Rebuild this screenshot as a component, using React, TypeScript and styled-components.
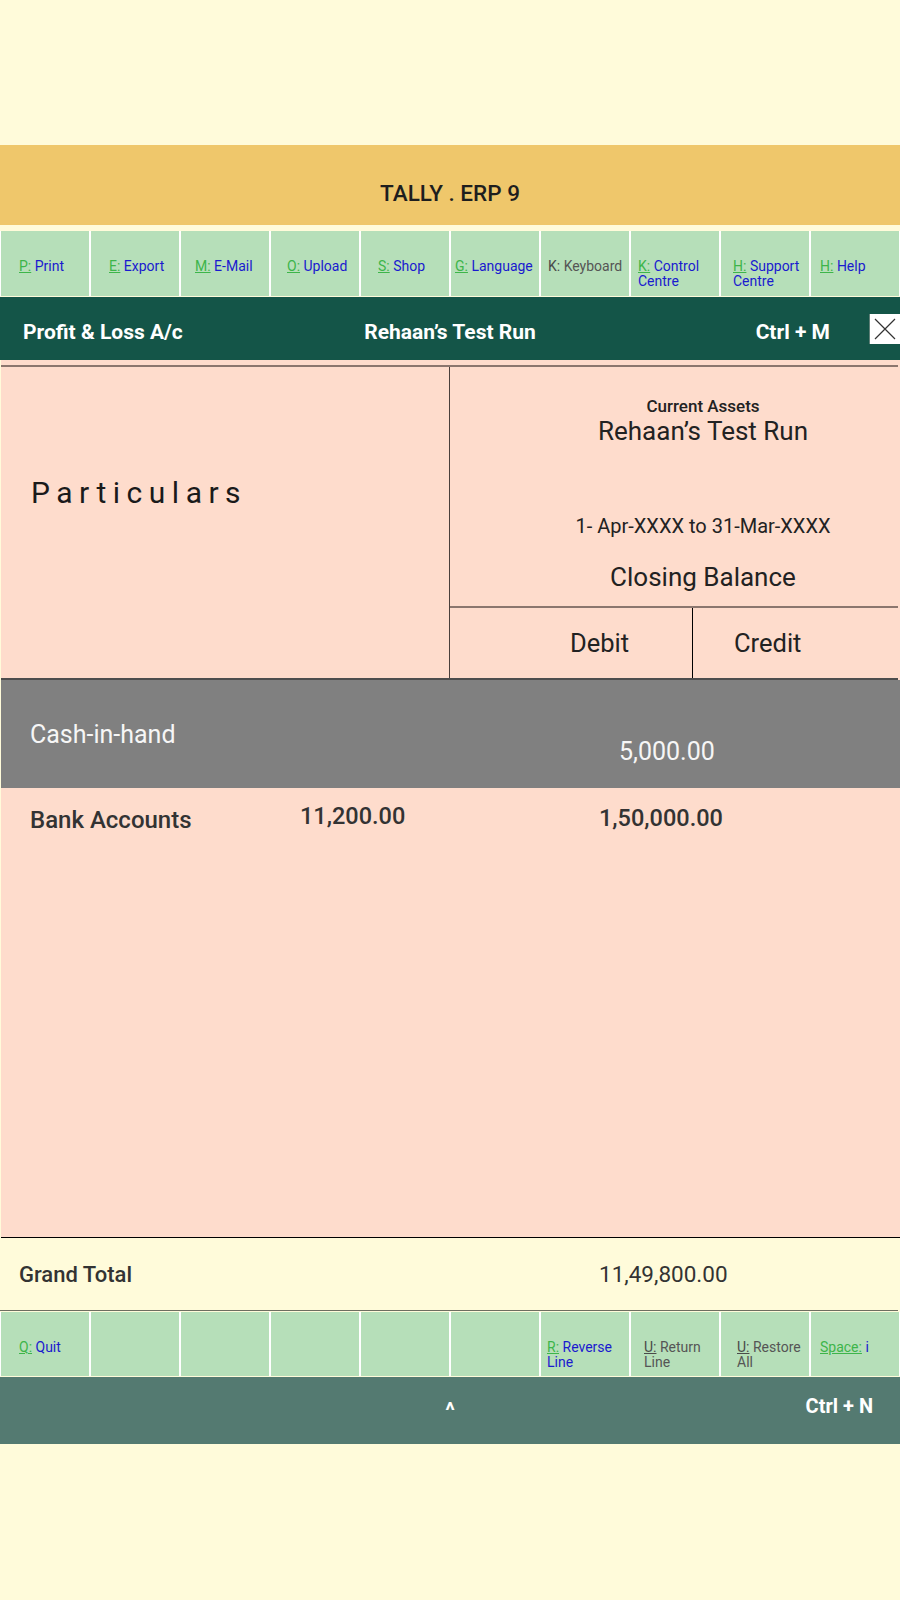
import React from 'react';
import styled, { createGlobalStyle } from 'styled-components';

const GlobalStyle = createGlobalStyle`
  html, body { margin: 0; padding: 0; background: #fffbda; }
  body { font-family: Roboto, "Liberation Sans", Arial, sans-serif; }
  * { box-sizing: border-box; }
`;

const Page = styled.div`
  width: 900px;
  min-height: 1600px;
  background: #fffbda;
  padding-top: 145px;
`;

const TitleBar = styled.header`
  height: 80px;
  background: #efc76b;
  display: flex;
  align-items: center;
  justify-content: center;
  padding-top: 16px;
  font-size: 22.5px;
  font-weight: 500;
  color: #1e1e1e;
`;

const KeyBar = styled.nav<{ $gap: number }>`
  display: grid;
  grid-template-columns: repeat(10, 1fr);
  height: ${p => (p.$gap > 1 ? 65 : 64)}px;
  margin-top: ${p => p.$gap}px;
`;

const KeyCell = styled.div<{ $inset: number }>`
  background: #b6dfb9;
  border-left: 1px solid #fff;
  border-right: 1px solid #fff;
  padding: 28px 2px 0 ${p => p.$inset}px;
  font-size: 14px;
  line-height: 15px;
`;

type Tone = 'active' | 'muted' | 'plain';

const KeyLetter = styled.span<{ $tone: Tone }>`
  color: ${p => (p.$tone === 'active' ? '#3db54a' : '#4a4a4a')};
  text-decoration: ${p => (p.$tone === 'plain' ? 'none' : 'underline')};
  text-underline-offset: 1px;
`;

const KeyLabel = styled.span<{ $tone: Tone }>`
  color: ${p => (p.$tone === 'active' ? '#1a1acf' : '#555555')};
`;

const ReportBar = styled.div`
  margin-top: 1px;
  height: 63px;
  background: #145548;
  display: grid;
  grid-template-columns: 1fr auto 1fr;
  align-items: center;
  color: #ffffff;
  font-weight: 700;
  font-size: 21px;
`;

const BarText = styled.div<{ $inset?: number }>`
  padding-top: 7px;
  padding-left: ${p => p.$inset || 0}px;
  white-space: nowrap;
`;

const BarRight = styled.div`
  display: flex;
  align-items: center;
  justify-content: flex-end;
  gap: 39px;
`;

const CloseBox = styled.div`
  width: 31px;
  height: 30px;
  background: #ffffff;
  border-left: 1px solid #5f7f77;
  display: flex;
  align-items: center;
  justify-content: center;
`;

const Sheet = styled.section`
  margin-left: 1px;
  height: 878px;
  background: #fedccc;
  padding-top: 5px;
  border-bottom: 1px solid #000;
  display: flex;
  flex-direction: column;
`;

const SheetHead = styled.div`
  display: grid;
  grid-template-columns: 449px 1fr;
  height: 315px;
  margin-right: 2px;
  border-top: 2px solid #8b766e;
  border-bottom: 2px solid #4d4d4d;
`;

const ParticularsCell = styled.div`
  border-right: 1px solid #4a3f3b;
  padding: 108px 0 0 30px;
  font-size: 30px;
  line-height: 35px;
  letter-spacing: 6.5px;
  color: #1a1a1a;
`;

const BalanceCell = styled.div`
  display: flex;
  flex-direction: column;
`;

const PeriodBlock = styled.div`
  height: 239px;
  display: flex;
  flex-direction: column;
  align-items: center;
  padding: 29px 0 0 58px;
  color: #222;
`;

const GroupName = styled.div`
  font-size: 17px;
  font-weight: 500;
  line-height: 20px;
`;

const CompanyName = styled.div`
  font-size: 26px;
  line-height: 29px;
  margin-top: 1px;
`;

const Period = styled.div`
  font-size: 20px;
  line-height: 23px;
  margin-top: 69px;
`;

const ColumnTitle = styled.div`
  font-size: 26px;
  line-height: 29px;
  margin-top: 25px;
`;

const SplitRow = styled.div`
  flex: 1;
  display: grid;
  grid-template-columns: 243px 1fr;
  border-top: 2px solid #8b766e;
`;

const SplitCell = styled.div<{ $inset: number; $divider?: boolean }>`
  display: flex;
  align-items: center;
  padding-left: ${p => p.$inset}px;
  font-size: 25.5px;
  color: #222;
  border-right: ${p => (p.$divider ? '1px solid #000' : 'none')};
`;

const LedgerRow = styled.div<{ $highlight?: boolean }>`
  display: grid;
  grid-template-columns: 270px 300px 1fr;
  align-items: start;
  padding-left: 29px;
  height: ${p => (p.$highlight ? '108px' : 'auto')};
  padding-top: ${p => (p.$highlight ? 40 : 18)}px;
  background: ${p => (p.$highlight ? '#808080' : 'transparent')};
  color: ${p => (p.$highlight ? '#f6f6f6' : '#333333')};
`;

const LedgerName = styled.div<{ $highlight?: boolean }>`
  font-size: ${p => (p.$highlight ? 25 : 24)}px;
  font-weight: ${p => (p.$highlight ? 400 : 500)};
  line-height: ${p => (p.$highlight ? 30 : 28)}px;
`;

const Amount = styled.div<{ $dx?: number; $dy?: number; $size: number; $weight: number }>`
  font-size: ${p => p.$size}px;
  font-weight: ${p => p.$weight};
  line-height: 28px;
  margin-left: ${p => p.$dx || 0}px;
  margin-top: ${p => p.$dy || 0}px;
`;

const TotalRow = styled.div`
  display: grid;
  grid-template-columns: 580px 1fr;
  align-items: center;
  height: 73px;
  margin-right: 2px;
  padding-left: 19px;
  border-bottom: 1px solid #6e6e60;
  color: #333;
`;

const TotalLabel = styled.div`
  font-size: 22px;
  font-weight: 500;
`;

const TotalAmount = styled.div`
  font-size: 22.5px;
`;

const FooterBar = styled.div`
  margin-top: 1px;
  height: 67px;
  background: #547a71;
  display: grid;
  grid-template-columns: 1fr auto 1fr;
  align-items: center;
  color: #fff;
  font-weight: 700;
  font-size: 20px;
`;

const Caret = styled.div`
  font-size: 22px;
`;

const FooterRight = styled.div`
  justify-self: end;
  padding: 0 27px 10px 0;
`;

type KeyItem = { k?: string; label?: string; inset?: number; tone?: Tone };

const topKeys: KeyItem[] = [
  { k: 'P:', label: 'Print', inset: 18 },
  { k: 'E:', label: 'Export', inset: 18 },
  { k: 'M:', label: 'E-Mail', inset: 14 },
  { k: 'O:', label: 'Upload', inset: 16 },
  { k: 'S:', label: 'Shop', inset: 17 },
  { k: 'G:', label: 'Language', inset: 4 },
  { k: 'K:', label: 'Keyboard', inset: 7, tone: 'plain' },
  { k: 'K:', label: 'Control Centre', inset: 7 },
  { k: 'H:', label: 'Support Centre', inset: 12 },
  { k: 'H:', label: 'Help', inset: 9 },
];

const bottomKeys: KeyItem[] = [
  { k: 'Q:', label: 'Quit', inset: 18 },
  {},
  {},
  {},
  {},
  {},
  { k: 'R:', label: 'Reverse Line', inset: 6 },
  { k: 'U:', label: 'Return Line', inset: 13, tone: 'muted' },
  { k: 'U:', label: 'Restore All', inset: 16, tone: 'muted' },
  { k: 'Space:', label: 'i', inset: 9 },
];

function KeyStrip({ items, gap }: { items: KeyItem[]; gap: number }) {
  return (
    <KeyBar $gap={gap}>
      {items.map((it, i) => {
        const tone = it.tone || 'active';
        return (
          <KeyCell key={i} $inset={it.inset || 0}>
            {it.k && (
              <>
                <KeyLetter $tone={tone}>{it.k}</KeyLetter>{' '}
                <KeyLabel $tone={tone}>{it.label}</KeyLabel>
              </>
            )}
          </KeyCell>
        );
      })}
    </KeyBar>
  );
}

export default function App() {
  return (
    <>
      <GlobalStyle />
      <Page>
        <TitleBar>TALLY . ERP 9</TitleBar>
        <KeyStrip items={topKeys} gap={6} />
        <ReportBar>
          <BarText $inset={23}>Profit &amp; Loss A/c</BarText>
          <BarText>Rehaan’s Test Run</BarText>
          <BarRight>
            <BarText>Ctrl + M</BarText>
            <CloseBox>
              <svg width="22" height="22" viewBox="0 0 22 22">
                <path d="M1 1 L21 21 M21 1 L1 21" stroke="#333" strokeWidth="1.2" fill="none" />
              </svg>
            </CloseBox>
          </BarRight>
        </ReportBar>
        <Sheet>
          <SheetHead>
            <ParticularsCell>Particulars</ParticularsCell>
            <BalanceCell>
              <PeriodBlock>
                <GroupName>Current Assets</GroupName>
                <CompanyName>Rehaan’s Test Run</CompanyName>
                <Period>1- Apr-XXXX to 31-Mar-XXXX</Period>
                <ColumnTitle>Closing Balance</ColumnTitle>
              </PeriodBlock>
              <SplitRow>
                <SplitCell $inset={120} $divider>Debit</SplitCell>
                <SplitCell $inset={41}>Credit</SplitCell>
              </SplitRow>
            </BalanceCell>
          </SheetHead>
          <LedgerRow $highlight>
            <LedgerName $highlight>Cash-in-hand</LedgerName>
            <div />
            <Amount $size={25} $weight={400} $dx={19} $dy={18}>5,000.00</Amount>
          </LedgerRow>
          <LedgerRow>
            <LedgerName>Bank Accounts</LedgerName>
            <Amount $size={23.5} $weight={500} $dy={-4}>11,200.00</Amount>
            <Amount $size={23.5} $weight={500} $dx={-1} $dy={-2}>1,50,000.00</Amount>
          </LedgerRow>
        </Sheet>
        <TotalRow>
          <TotalLabel>Grand Total</TotalLabel>
          <TotalAmount>11,49,800.00</TotalAmount>
        </TotalRow>
        <KeyStrip items={bottomKeys} gap={1} />
        <FooterBar>
          <div />
          <Caret>^</Caret>
          <FooterRight>Ctrl + N</FooterRight>
        </FooterBar>
      </Page>
    </>
  );
}
